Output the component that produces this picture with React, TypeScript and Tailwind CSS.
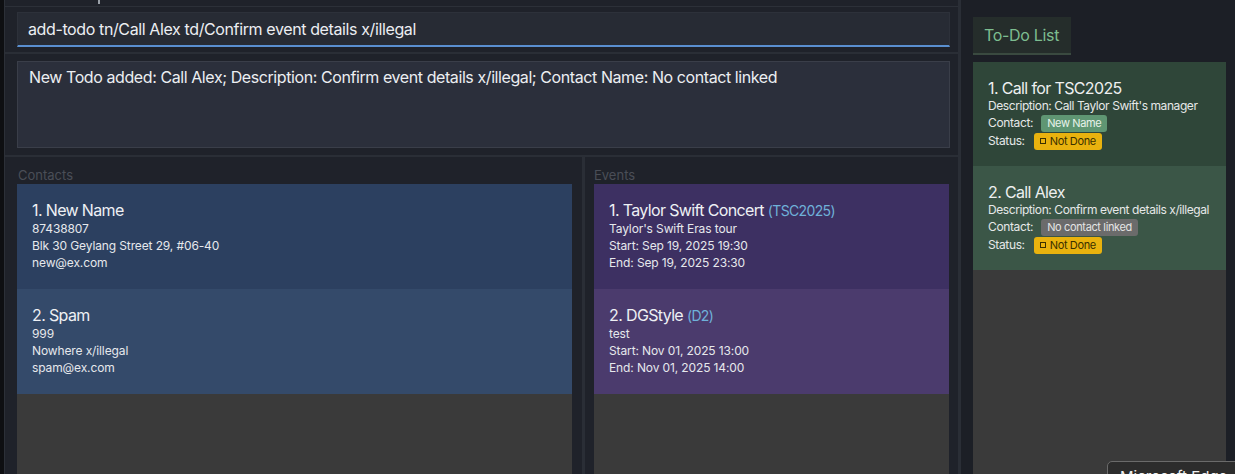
import React from "react";

const contacts = [
  { name: "New Name", phone: "87438807", address: "Blk 30 Geylang Street 29, #06-40", email: "new@ex.com" },
  { name: "Spam", phone: "999", address: "Nowhere x/illegal", email: "spam@ex.com" },
];

const events = [
  { name: "Taylor Swift Concert", code: "TSC2025", desc: "Taylor's Swift Eras tour", start: "Sep 19, 2025 19:30", end: "Sep 19, 2025 23:30" },
  { name: "DGStyle", code: "D2", desc: "test", start: "Nov 01, 2025 13:00", end: "Nov 01, 2025 14:00" },
];

const todos = [
  { name: "Call for TSC2025", desc: "Call Taylor Swift's manager", contact: "New Name", linked: true },
  { name: "Call Alex", desc: "Confirm event details x/illegal", contact: "No contact linked", linked: false },
];

function ContactCard({ c, i }: { c: any; i: number }) {
  return (
    <div className={`h-[105px] px-[15px] pt-[17px] ${i % 2 === 0 ? "bg-[#2c4060]" : "bg-[#344a6a]"}`}>
      <div className="text-[16px] leading-[19px] tracking-[-0.04em] text-[#eef0f4]">
        {i + 1}. {c.name}
      </div>
      <div className="text-[12px] leading-[17px] tracking-[-0.01em] text-[#e6e8ec]">
        <div>{c.phone}</div>
        <div>{c.address}</div>
        <div>{c.email}</div>
      </div>
    </div>
  );
}

function EventCard({ e, i }: { e: any; i: number }) {
  return (
    <div className={`h-[105px] px-[15px] pt-[17px] ${i % 2 === 0 ? "bg-[#3d3062]" : "bg-[#4b3b6d]"}`}>
      <div className="text-[16px] leading-[19px] tracking-[-0.04em] text-[#eef0f4]">
        {i + 1}. {e.name} <span className="text-[14px] text-[#6fb1d9]">({e.code})</span>
      </div>
      <div className="text-[12px] leading-[17px] tracking-[-0.01em] text-[#e6e8ec]">
        <div>{e.desc}</div>
        <div>Start: {e.start}</div>
        <div>End: {e.end}</div>
      </div>
    </div>
  );
}

function TodoCard({ t, i }: { t: any; i: number }) {
  return (
    <div className={`h-[104px] px-[15px] pt-[16px] ${i % 2 === 0 ? "bg-[#2f4639]" : "bg-[#3b5647]"}`}>
      <div className="text-[16px] leading-[20px] tracking-[-0.04em] text-[#eef0f0]">
        {i + 1}. {t.name}
      </div>
      <div className="text-[12px] leading-[16px] tracking-[-0.035em] whitespace-nowrap text-[#e6e8e8]">
        Description: {t.desc}
      </div>
      <div className="flex items-center h-[18px] gap-[8px] text-[12px] tracking-[-0.03em] text-[#e6e8e8]">
        <span>Contact:</span>
        <span
          className={`rounded-[3px] px-[6px] h-[17px] leading-[17px] text-[11px] ${
            t.linked ? "bg-[#5f9673] text-[#e8f2ea]" : "bg-[#6b6b6b] text-[#e4e4e4]"
          }`}
        >
          {t.contact}
        </span>
      </div>
      <div className="flex items-center h-[18px] gap-[9px] text-[12px] tracking-[-0.03em] text-[#e6e8e8]">
        <span>Status:</span>
        <span className="flex items-center gap-[4px] rounded-[3px] px-[6px] h-[17px] text-[11px] bg-[#e9b20e] text-[#3a3000]">
          <span className="inline-block w-[6px] h-[6px] border border-[#3a3000]" />
          Not Done
        </span>
      </div>
    </div>
  );
}

export default function App() {
  return (
    <div
      className="relative flex w-[1235px] h-[474px] overflow-hidden bg-[#1f222a]"
      style={{ fontFamily: "Inter, 'Noto Sans', sans-serif" }}
    >
      <div className="w-[5px] bg-[#0e0f12] border-r border-[#2c3038]" />

      {/* main left */}
      <div className="flex flex-col w-[956px] border-r-[3px] border-[#2a2e36]">
        <div className="h-[7px] border-b border-[#2c3038] pl-[93px]">
          <div className="w-[2px] h-[4px] bg-[#9aa0a8]" />
        </div>

        <div className="h-[47px] pl-[12px] pr-[8px] pt-[5px] border-b-[2px] border-[#2a2e36]">
          <div className="h-[35px] bg-[#272b34] border border-[#2d313a] border-b-[2px] border-b-[#5a8fd0] flex items-center pl-[10px] text-[16px] tracking-[-0.024em] text-[#eceef2]">
            add-todo tn/Call Alex td/Confirm event details x/illegal
          </div>
        </div>

        <div className="h-[103px] pl-[12px] pr-[8px] pt-[7px] border-b-[2px] border-[#2a2e36]">
          <div className="h-[87px] bg-[#2b2f3b] border border-[#3a3e49] pl-[11px] pt-[4px] text-[16px] leading-[22px] tracking-[-0.026em] text-[#eceef2]">
            New Todo added: Call Alex; Description: Confirm event details x/illegal; Contact Name: No contact linked
          </div>
        </div>

        <div className="flex flex-1 min-h-0">
          <div className="flex flex-col w-[580px] border-r-[3px] border-[#2a2e36] pl-[12px] pr-[10px]">
            <div className="h-[27px] pt-[10px] text-[13px] leading-[17px] text-[#4a4e57] pl-[1px]">Contacts</div>
            <div className="flex-1 bg-[#3a3a3a]">
              {contacts.map((c, i) => (
                <ContactCard key={i} c={c} i={i} />
              ))}
            </div>
          </div>
          <div className="flex flex-col flex-1 pl-[9px] pr-[9px]">
            <div className="h-[27px] pt-[10px] text-[13px] leading-[17px] text-[#4a4e57]">Events</div>
            <div className="flex-1 bg-[#3a3a3a]">
              {events.map((e, i) => (
                <EventCard key={i} e={e} i={i} />
              ))}
            </div>
          </div>
        </div>
      </div>

      {/* right todo */}
      <div className="flex flex-col flex-1 bg-[#1c1f26] pl-[12px] pr-[9px] pt-[17px]">
        <div className="w-[98px] h-[38px] bg-[#252d2b] border-b-[2px] border-[#3a4a40] flex items-center pl-[11px] text-[16px] tracking-[-0.02em] text-[#7dbd90]">
          To-Do List
        </div>
        <div className="mt-[7px] flex-1 bg-[#3a3a3a]">
          {todos.map((t, i) => (
            <TodoCard key={i} t={t} i={i} />
          ))}
        </div>
      </div>

      <div className="absolute left-[1107px] top-[461px] w-[140px] h-[30px] rounded-[5px] border border-[#6a6a6a] bg-[#2c2c2c] pl-[12px] pt-[4px] text-[15px] text-[#f0f0f0]">
        Microsoft Edge
      </div>
    </div>
  );
}
